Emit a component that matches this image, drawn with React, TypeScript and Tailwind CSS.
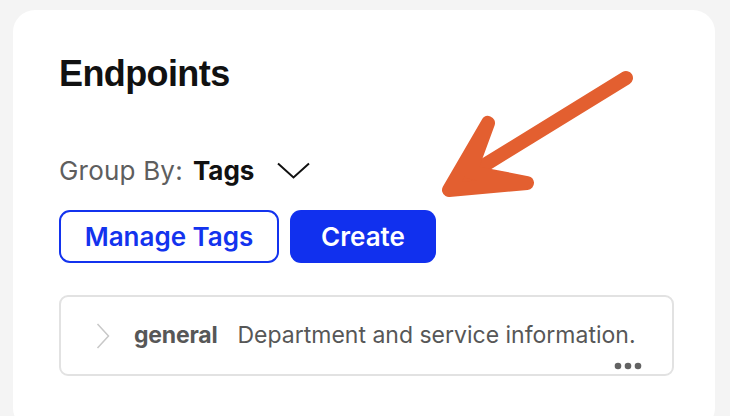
import React from "react";

const Arrow = () => (
  <svg
    className="absolute left-0 top-0 pointer-events-none"
    width="730"
    height="416"
    viewBox="0 0 730 416"
  >
    <g stroke="#e35f30" strokeWidth="14" strokeLinecap="round" strokeLinejoin="round" fill="#e35f30">
      <line x1="626" y1="78" x2="470" y2="174" />
      <polygon points="488,123 449,190 527,183 470,172" />
    </g>
  </svg>
);

const App = () => {
  return (
    <div className="relative w-[730px] h-[416px] overflow-hidden bg-[#f4f4f4] pt-[10px] pl-[13px] pr-[15px]">
      <div className="h-[420px] bg-white rounded-[22px] pl-[46px] pr-[41px] pt-[44px] font-['Inter',sans-serif]">
        <h1 className="font-['Liberation_Sans',sans-serif] text-[36px] leading-[40px] font-bold text-[#111] tracking-[-0.6px]">
          Endpoints
        </h1>
        <div className="mt-[56px] flex items-center h-[40px] text-[26px]">
          <span className="text-[#5e5e5e] tracking-[0.2px]">Group By:</span>
          <span className="ml-[10px] font-bold text-[#111]">Tags</span>
          <svg className="ml-[23px]" width="33" height="17" viewBox="0 0 33 17" fill="none">
            <path d="M1 1.5 L16.5 15.5 L32 1.5" stroke="#111" strokeWidth="2" />
          </svg>
        </div>
        <div className="mt-[20px] flex gap-[11px] text-[26px] font-semibold">
          <button className="w-[220px] h-[53px] rounded-[11px] border-2 border-[#1333ee] text-[#1333ee]">
            Manage Tags
          </button>
          <button className="w-[146px] h-[53px] rounded-[11px] bg-[#1130ee] text-white">Create</button>
        </div>
        <div className="relative mt-[32px] h-[81px] rounded-[9px] border-2 border-[#e2e2e2] flex items-center pl-[35px] text-[23px] text-[#575757]">
          <svg width="14" height="26" viewBox="0 0 14 26" fill="none">
            <path d="M1.5 1 L12.5 13 L1.5 25" stroke="#c8c8c8" strokeWidth="1.5" />
          </svg>
          <span className="ml-[24px] font-bold tracking-[-0.2px]">general</span>
          <span className="ml-[20px]">Department and service information.</span>
          <svg className="absolute right-[30px] bottom-[4px]" width="28" height="8" viewBox="0 0 28 8">
            <circle cx="4" cy="4" r="3.3" fill="#636363" />
            <circle cx="14" cy="4" r="3.3" fill="#636363" />
            <circle cx="24" cy="4" r="3.3" fill="#636363" />
          </svg>
        </div>
      </div>
      <Arrow />
    </div>
  );
};

export default App;
